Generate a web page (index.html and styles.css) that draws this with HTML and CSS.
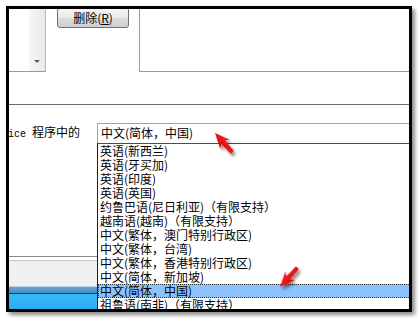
FILE: index.html
```html
<!DOCTYPE html>
<html lang="zh-CN">
<head>
  <meta charset="UTF-8" />
  <title>语言设置</title>
  <link rel="stylesheet" href="styles.css">
</head>
<body>
  <div class="shot">
    <div class="frame">
      <div class="top">
        <div class="list-pane">
          <div class="scrollbar"><span class="arrow-down"></span></div>
        </div>
        <div class="btn-pane">
          <button class="btn" type="button">删除(<u>R</u>)</button>
        </div>
        <div class="blank-pane"></div>
      </div>
      <div class="spacer"></div>

      <div class="lang">
        <div class="lang-side">
          <div class="lang-label"><span class="latin">Office </span>程序中的</div>
          <div class="side-bottom">
            <div class="sep"></div>
            <div class="gray-fill"></div>
            <div class="bar-steel"></div>
            <div class="bar-blue"></div>
          </div>
        </div>
        <div class="lang-field">
          <div class="combo">中文(简体，中国)</div>
          <ul class="dropdown">
            <li>英语(新西兰)</li>
            <li>英语(牙买加)</li>
            <li>英语(印度)</li>
            <li>英语(英国)</li>
            <li>约鲁巴语(尼日利亚)（有限支持）</li>
            <li>越南语(越南)（有限支持）</li>
            <li>中文(繁体，澳门特别行政区)</li>
            <li>中文(繁体，台湾)</li>
            <li>中文(繁体，香港特别行政区)</li>
            <li>中文(简体，新加坡)</li>
            <li class="selected">中文(简体，中国)</li>
            <li>祖鲁语(南非)（有限支持）</li>
          </ul>
        </div>
      </div>
    </div>

    <!-- red annotation arrows drawn over the screenshot -->
    <svg class="marks" width="418" height="318" viewBox="0 0 418 318" aria-hidden="true">
      <defs>
        <linearGradient id="red" x1="0" y1="0" x2="0" y2="1">
          <stop offset="0" stop-color="#ff2a2a" />
          <stop offset="1" stop-color="#d40000" />
        </linearGradient>
        <filter id="shade" x="-50%" y="-50%" width="200%" height="200%">
          <feDropShadow dx="2" dy="3" stdDeviation="1.6" flood-color="#000" flood-opacity="0.45" />
        </filter>
      </defs>
      <g filter="url(#shade)" fill="url(#red)">
        <polygon transform="translate(215 133) rotate(48)" points="0,0 15,-6.5 12.5,-2.5 26,-2 26,2 12.5,2.5 15,6.5" />
        <polygon transform="translate(280 287) rotate(-48)" points="0,0 15,-6.5 12.5,-2.5 26,-2 26,2 12.5,2.5 15,6.5" />
      </g>
    </svg>
  </div>
</body>
</html>
```

FILE: styles.css
```css
*, *::before, *::after {
  box-sizing: border-box;
}
body {
  margin: 0;
  background: #fff;
  font-family: "Noto Sans CJK SC", "Noto Sans", sans-serif;
  font-size: 12px;
  color: #000;
}
.shot {
  position: relative;
  width: 418px;
  height: 318px;
  padding: 6px 0 0 6px;
}

/* Black picture frame */
.frame {
  width: 406px;
  height: 306px;
  border: 3px solid #000;
  background: #fff;
  overflow: hidden;
  box-shadow: 3px 3px 4px rgba(0,0,0,0.45);
}

/* Top strip: list with scrollbar, delete button, empty pane */
.top {
  display: flex;
  height: 63px;
}
.list-pane {
  width: 37px;
  display: flex;
  justify-content: flex-end;
  border-bottom: 1px solid #9a9a9a;
}
.scrollbar {
  width: 17px;
  border-right: 1px solid #b8b8b8;
  background: linear-gradient(90deg, #f6f6f6, #e9e9e9);
  display: flex;
  justify-content: center;
  align-items: flex-end;
  padding-bottom: 8px;
}
.arrow-down {
  width: 0;
  height: 0;
  border-left: 3px solid transparent;
  border-right: 3px solid transparent;
  border-top: 3px solid #5a5a5a;
}
.btn-pane {
  width: 93px;
  padding-left: 11px;
}
.btn {
  display: block;
  width: 72px;
  height: 21px;
  margin-top: -2px;
  padding: 0;
  border: 1px solid #707070;
  border-radius: 3px;
  background: linear-gradient(#f4f4f4, #ebebeb 50%, #dddddd 51%, #cfcfcf);
  font-family: inherit;
  font-size: 12px;
  line-height: 18px;
  color: #000;
}
.btn u {
  text-decoration: underline;
}
.blank-pane {
  flex: 1;
  border-left: 1px solid #9a9a9a;
  border-bottom: 1px solid #9a9a9a;
}
.spacer {
  height: 33px;
  border-bottom: 1px solid #6a6a6a;
}

/* Language row with open dropdown */
.lang {
  display: flex;
  height: 204px;
}
.lang-side {
  width: 88px;
  display: flex;
  flex-direction: column;
}
.lang-label {
  margin-left: -19px;
  padding-top: 20px;
  line-height: 14px;
  white-space: nowrap;
}
.latin {
  font-family: "Liberation Mono", monospace;
  font-size: 10px;
  white-space: pre;
}
.side-bottom {
  margin-top: auto;
}
.sep {
  height: 5px;
  border-top: 1px solid #8a8a8a;
  border-bottom: 1px solid #c8c8c8;
}
.gray-fill {
  height: 26px;
  background: #f0f0f0;
  border-bottom: 1px solid #b9cfe0;
}
.bar-steel {
  height: 7px;
  background: linear-gradient(#6aa6d6, #4a8cc2);
  border-bottom: 1px solid #1d3d5e;
}
.bar-blue {
  height: 15px;
  background: linear-gradient(#36b8fa, #2aaef3);
}
.lang-field {
  flex: 1;
  padding-top: 18px;
}
.combo {
  height: 20px;
  border-top: 1px solid #a5a5a5;
  border-left: 1px solid #a5a5a5;
  padding-left: 3px;
  line-height: 18px;
  white-space: nowrap;
}
.dropdown {
  list-style: none;
  margin: 0;
  padding: 0;
  border-top: 1px solid #4c4c4c;
  border-left: 1px solid #1e1e1e;
}
.dropdown li {
  height: 14px;
  line-height: 14px;
  padding-left: 2px;
  white-space: nowrap;
}
.dropdown li.selected {
  background: #8dc3fd;
  border: 1px dotted #333;
  border-right: 0;
  padding-left: 1px;
  line-height: 12px;
}

.marks {
  position: absolute;
  top: 0;
  left: 0;
  pointer-events: none;
}
```
